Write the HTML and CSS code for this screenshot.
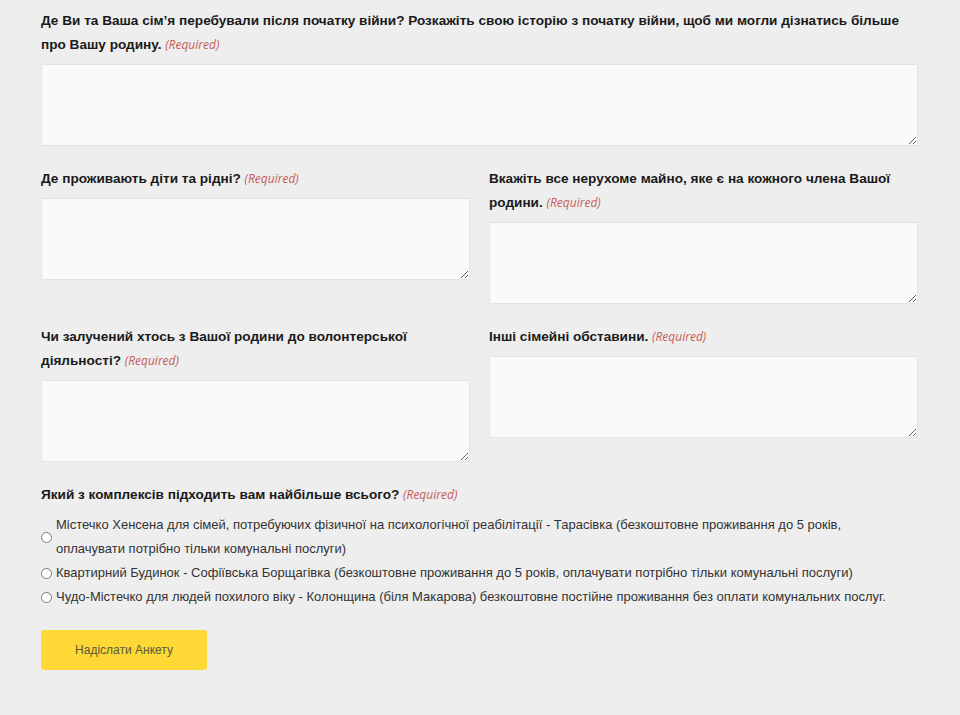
FILE: index.html
```html
<!DOCTYPE html>
<html lang="uk">
<head>
<meta charset="utf-8">
<title>Анкета</title>
<link rel="stylesheet" href="styles.css">
</head>
<body>
<form class="form">
  <div class="field full">
    <label class="label">Де Ви та Ваша сім’я перебували після початку війни? Розкажіть свою історію з початку війни, щоб ми могли дізнатись більше про Вашу родину. <span class="req">(Required)</span></label>
    <textarea class="area"></textarea>
  </div>
  <div class="field">
    <label class="label">Де проживають діти та рідні? <span class="req">(Required)</span></label>
    <textarea class="area"></textarea>
  </div>
  <div class="field">
    <label class="label">Вкажіть все нерухоме майно, яке є на кожного члена Вашої родини. <span class="req">(Required)</span></label>
    <textarea class="area"></textarea>
  </div>
  <div class="field">
    <label class="label">Чи залучений хтось з Вашої родини до волонтерської діяльності? <span class="req">(Required)</span></label>
    <textarea class="area"></textarea>
  </div>
  <div class="field">
    <label class="label">Інші сімейні обставини. <span class="req">(Required)</span></label>
    <textarea class="area"></textarea>
  </div>
  <div class="field full">
    <div class="label">Який з комплексів підходить вам найбільше всього? <span class="req">(Required)</span></div>
    <div class="options">
      <label class="option"><input type="radio" name="c" class="radio"><span class="opt-text">Містечко Хенсена для сімей, потребуючих фізичної на психологічної реабілітації - Тарасівка (безкоштовне проживання до 5 років, оплачувати потрібно тільки комунальні послуги)</span></label>
      <label class="option"><input type="radio" name="c" class="radio"><span class="opt-text">Квартирний Будинок - Софіївська Борщагівка (безкоштовне проживання до 5 років, оплачувати потрібно тільки комунальні послуги)</span></label>
      <label class="option"><input type="radio" name="c" class="radio"><span class="opt-text">Чудо-Містечко для людей похилого віку - Колонщина (біля Макарова) безкоштовне постійне проживання без оплати комунальних послуг.</span></label>
    </div>
  </div>
  <div class="field full">
    <button type="button" class="submit">Надіслати Анкету</button>
  </div>
</form>
</body>
</html>
```
FILE: styles.css
```css
html, body {
  margin: 0;
  padding: 0;
  background: #eeeeee;
}
body {
  font-family: "Liberation Sans", Arial, sans-serif;
  color: #222;
}
.form {
  width: 877px;
  margin: 0 0 0 41px;
  padding-top: 9px;
  display: grid;
  grid-template-columns: 429px 429px;
  column-gap: 19px;
  row-gap: 21px;
}
.field {
  display: flex;
  flex-direction: column;
}
.full {
  grid-column: 1 / -1;
}
.label {
  font-size: 13.6px;
  font-weight: bold;
  line-height: 24px;
  color: #1a1a1a;
  margin-bottom: 7px;
}
.req {
  font-family: "Open Sans", sans-serif;
  font-style: italic;
  font-weight: normal;
  font-size: 12px;
  line-height: 1;
  color: #c65b58;
}
.area {
  display: block;
  box-sizing: border-box;
  width: 100%;
  height: 82px;
  margin: 0;
  background: #fafafa;
  border: 1px solid #e3e3e3;
  border-radius: 0;
  resize: vertical;
}
.options {
  display: flex;
  flex-direction: column;
  margin-top: -1px;
}
.option {
  display: flex;
  align-items: center;
  font-size: 13px;
  line-height: 24px;
  color: #333;
}
.radio {
  width: 11px;
  height: 11px;
  margin: 0 4px 0 0;
  flex: none;
}
.opt-text {
  max-width: 850px;
}
.submit {
  width: 166px;
  height: 40px;
  margin: 0;
  background: #fed936;
  border: none;
  border-radius: 3px;
  font-family: "Liberation Sans", Arial, sans-serif;
  font-size: 12px;
  color: #5b5736;
}
```
